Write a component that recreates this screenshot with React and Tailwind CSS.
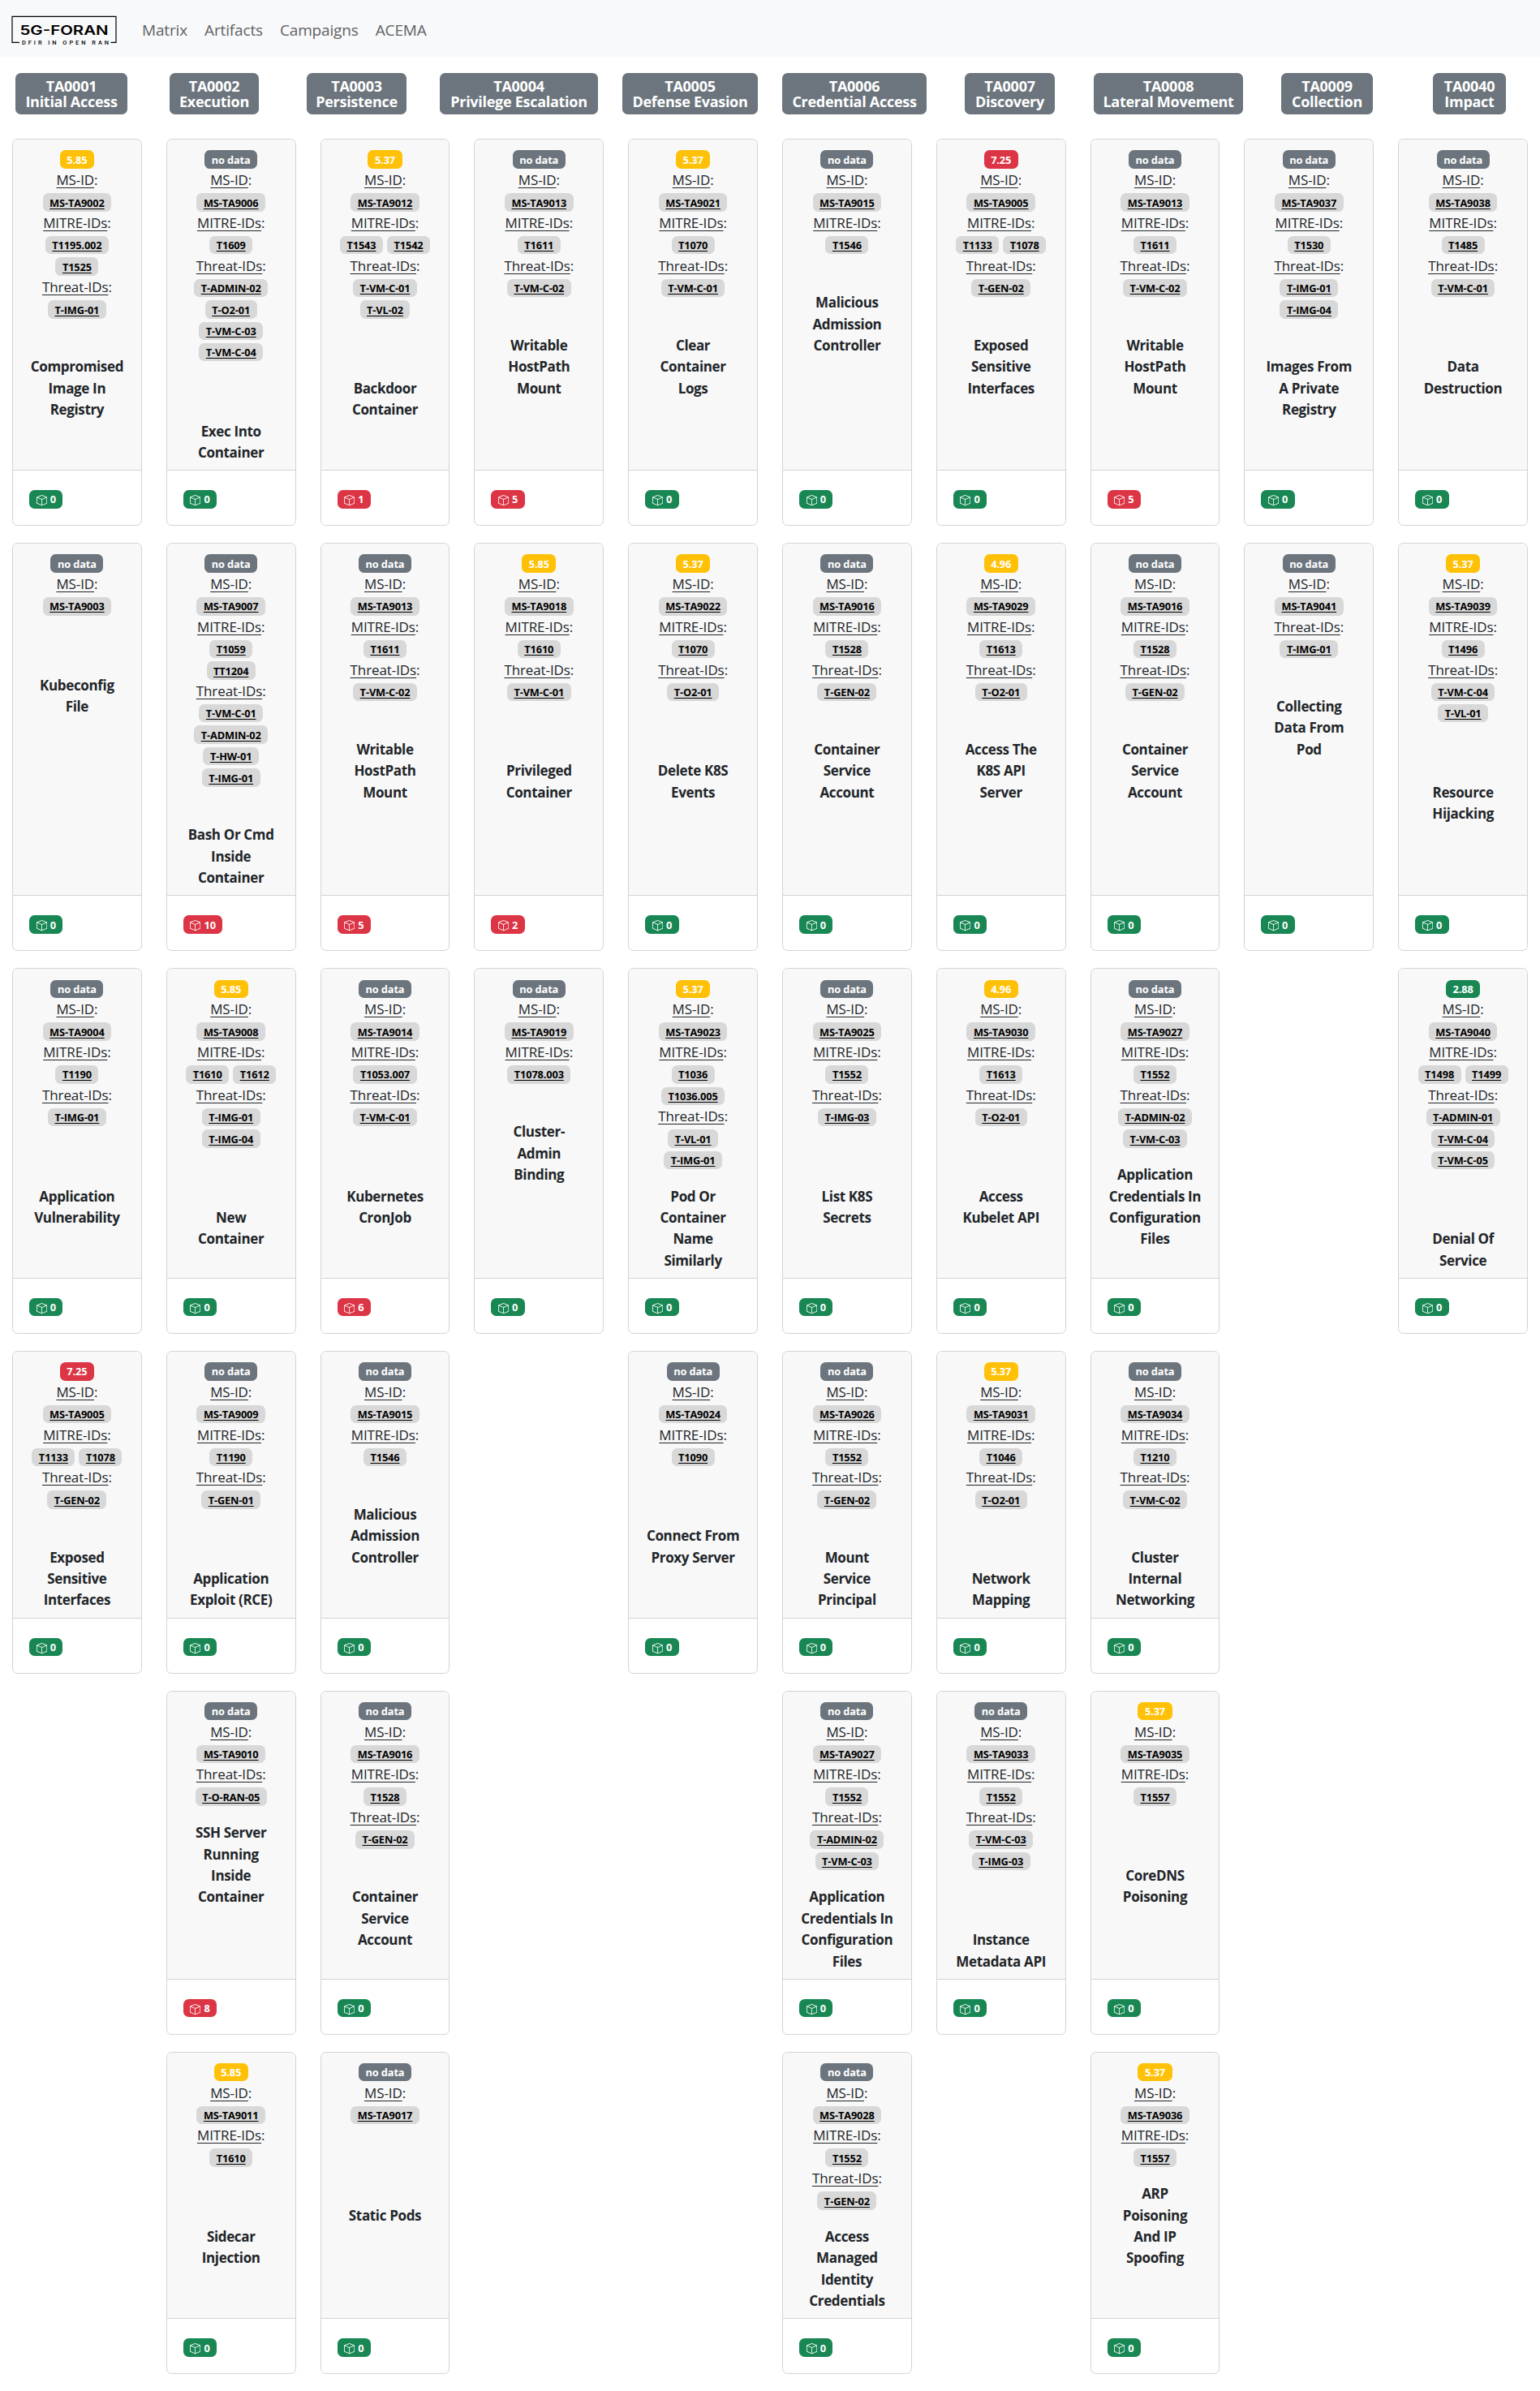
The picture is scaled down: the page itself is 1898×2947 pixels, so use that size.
import React from "react";
import { BsBox } from "react-icons/bs";

const NAV = ["Matrix", "Artifacts", "Campaigns", "ACEMA"];

const TACTICS = [
  ["TA0001", "Initial Access", "ml-[19px] w-[138px]"],
  ["TA0002", "Execution", "ml-[52px] w-[110px]"],
  ["TA0003", "Persistence", "ml-[59px] w-[123px]"],
  ["TA0004", "Privilege Escalation", "ml-[41px] w-[195px]"],
  ["TA0005", "Defense Evasion", "ml-[30px] w-[167px]"],
  ["TA0006", "Credential Access", "ml-[30px] w-[178px]"],
  ["TA0007", "Discovery", "ml-[47px] w-[111px]"],
  ["TA0008", "Lateral Movement", "ml-[48px] w-[184px]"],
  ["TA0009", "Collection", "ml-[47px] w-[113px]"],
  ["TA0040", "Impact", "ml-[74px] w-[90px]"],
];

const card = (score, ms, mitre, threats, name, count = 0) => ({
  score,
  ms,
  mitre: mitre ? mitre.split(" ") : [],
  threats: threats ? threats.split(" ") : [],
  name,
  count,
});

const ROWS = [
  [
    card("5.85", "9002", "T1195.002 T1525", "T-IMG-01", "Compromised\nImage In\nRegistry"),
    card(null, "9006", "T1609", "T-ADMIN-02 T-O2-01 T-VM-C-03 T-VM-C-04", "Exec Into\nContainer"),
    card("5.37", "9012", "T1543 T1542", "T-VM-C-01 T-VL-02", "Backdoor\nContainer", 1),
    card(null, "9013", "T1611", "T-VM-C-02", "Writable\nHostPath\nMount", 5),
    card("5.37", "9021", "T1070", "T-VM-C-01", "Clear\nContainer\nLogs"),
    card(null, "9015", "T1546", "", "Malicious\nAdmission\nController"),
    card("7.25", "9005", "T1133 T1078", "T-GEN-02", "Exposed\nSensitive\nInterfaces"),
    card(null, "9013", "T1611", "T-VM-C-02", "Writable\nHostPath\nMount", 5),
    card(null, "9037", "T1530", "T-IMG-01 T-IMG-04", "Images From\nA Private\nRegistry"),
    card(null, "9038", "T1485", "T-VM-C-01", "Data\nDestruction"),
  ],
  [
    card(null, "9003", "", "", "Kubeconfig\nFile"),
    card(null, "9007", "T1059 TT1204", "T-VM-C-01 T-ADMIN-02 T-HW-01 T-IMG-01", "Bash Or Cmd\nInside\nContainer", 10),
    card(null, "9013", "T1611", "T-VM-C-02", "Writable\nHostPath\nMount", 5),
    card("5.85", "9018", "T1610", "T-VM-C-01", "Privileged\nContainer", 2),
    card("5.37", "9022", "T1070", "T-O2-01", "Delete K8S\nEvents"),
    card(null, "9016", "T1528", "T-GEN-02", "Container\nService\nAccount"),
    card("4.96", "9029", "T1613", "T-O2-01", "Access The\nK8S API\nServer"),
    card(null, "9016", "T1528", "T-GEN-02", "Container\nService\nAccount"),
    card(null, "9041", "", "T-IMG-01", "Collecting\nData From\nPod"),
    card("5.37", "9039", "T1496", "T-VM-C-04 T-VL-01", "Resource\nHijacking"),
  ],
  [
    card(null, "9004", "T1190", "T-IMG-01", "Application\nVulnerability"),
    card("5.85", "9008", "T1610 T1612", "T-IMG-01 T-IMG-04", "New\nContainer"),
    card(null, "9014", "T1053.007", "T-VM-C-01", "Kubernetes\nCronJob", 6),
    card(null, "9019", "T1078.003", "", "Cluster-\nAdmin\nBinding"),
    card("5.37", "9023", "T1036 T1036.005", "T-VL-01 T-IMG-01", "Pod Or\nContainer\nName\nSimilarly"),
    card(null, "9025", "T1552", "T-IMG-03", "List K8S\nSecrets"),
    card("4.96", "9030", "T1613", "T-O2-01", "Access\nKubelet API"),
    card(null, "9027", "T1552", "T-ADMIN-02 T-VM-C-03", "Application\nCredentials In\nConfiguration\nFiles"),
    null,
    card("2.88", "9040", "T1498 T1499", "T-ADMIN-01 T-VM-C-04 T-VM-C-05", "Denial Of\nService"),
  ],
  [
    card("7.25", "9005", "T1133 T1078", "T-GEN-02", "Exposed\nSensitive\nInterfaces"),
    card(null, "9009", "T1190", "T-GEN-01", "Application\nExploit (RCE)"),
    card(null, "9015", "T1546", "", "Malicious\nAdmission\nController"),
    null,
    card(null, "9024", "T1090", "", "Connect From\nProxy Server"),
    card(null, "9026", "T1552", "T-GEN-02", "Mount\nService\nPrincipal"),
    card("5.37", "9031", "T1046", "T-O2-01", "Network\nMapping"),
    card(null, "9034", "T1210", "T-VM-C-02", "Cluster\nInternal\nNetworking"),
    null,
    null,
  ],
  [
    null,
    card(null, "9010", "", "T-O-RAN-05", "SSH Server\nRunning\nInside\nContainer", 8),
    card(null, "9016", "T1528", "T-GEN-02", "Container\nService\nAccount"),
    null,
    null,
    card(null, "9027", "T1552", "T-ADMIN-02 T-VM-C-03", "Application\nCredentials In\nConfiguration\nFiles"),
    card(null, "9033", "T1552", "T-VM-C-03 T-IMG-03", "Instance\nMetadata API"),
    card("5.37", "9035", "T1557", "", "CoreDNS\nPoisoning"),
    null,
    null,
  ],
  [
    null,
    card("5.85", "9011", "T1610", "", "Sidecar\nInjection"),
    card(null, "9017", "", "", "Static Pods"),
    null,
    null,
    card(null, "9028", "T1552", "T-GEN-02", "Access\nManaged\nIdentity\nCredentials"),
    null,
    card("5.37", "9036", "T1557", "", "ARP\nPoisoning\nAnd IP\nSpoofing"),
    null,
    null,
  ],
];

function scoreColor(score) {
  if (!score) return "bg-[#6c757d]";
  const n = parseFloat(score);
  if (n >= 7) return "bg-[#dc3545]";
  if (n >= 4) return "bg-[#ffc107]";
  return "bg-[#198754]";
}

function Line({ children }) {
  return <div className="flex h-[26.4px] items-start justify-center pt-[4px]">{children}</div>;
}

function Pill({ className, children }) {
  return (
    <span
      className={`block h-[22.4px] rounded-[6.6px] px-[8.5px] pt-[1.3px] text-[12.8px] leading-[20.4px] font-bold tracking-[-0.13px] whitespace-nowrap ${className}`}
    >
      {children}
    </span>
  );
}

function Label({ children }) {
  return (
    <div className="h-[26.4px] pt-[1.4px] text-[17px] leading-[26.4px] tracking-[-0.1px]">
      <span className="underline decoration-1 underline-offset-[3px]">{children}</span>:
    </div>
  );
}

function IdGroup({ label, ids }) {
  if (!ids.length) return null;
  return (
    <>
      <Label>{label}</Label>
      <div className="flex flex-wrap justify-center gap-x-[5px]">
        {ids.map((id) => (
          <Line key={id}>
            <Pill className="bg-[#d8d8d8] text-black underline decoration-1 underline-offset-2">{id}</Pill>
          </Line>
        ))}
      </div>
    </>
  );
}

function Card({ data }) {
  return (
    <div className="mx-[15px] flex flex-col overflow-hidden rounded-[6.6px] border border-[#d3d3d3] bg-white">
      <div className="grow border-b border-[#d3d3d3] bg-[#f8f8f8] px-[22px] pt-[9.2px] pb-[7.8px] text-center">
        <Line>
          <Pill className={`text-white ${scoreColor(data.score)}`}>{data.score || "no data"}</Pill>
        </Line>
        <IdGroup label="MS-ID" ids={[`MS-TA${data.ms}`]} />
        <IdGroup label="MITRE-IDs" ids={data.mitre} />
        <IdGroup label="Threat-IDs" ids={data.threats} />
        <div className="-mx-4 mt-[20.4px] flex h-[105.6px] items-end justify-center">
          <span className="text-[17px] leading-[26.4px] font-bold tracking-[-0.35px] whitespace-pre-line">
            {data.name}
          </span>
        </div>
      </div>
      <div className="flex h-[67px] items-start px-5 pt-[24px]">
        <Pill className={`text-white ${data.count ? "bg-[#dc3545]" : "bg-[#198754]"}`}>
          <span className="flex items-center gap-1">
            <BsBox className="mt-[2px] size-[13.2px]" />
            {data.count}
          </span>
        </Pill>
      </div>
    </div>
  );
}

function Logo() {
  return (
    <svg width="130" height="42" viewBox="0 0 130 42" className="mt-[18px] block text-black">
      <path d="M10 34.3H1V2.3H129V34.3H122.5" fill="none" stroke="currentColor" strokeWidth="1.2" />
      <text
        x="10.5"
        y="25.4"
        textLength="109"
        lengthAdjust="spacingAndGlyphs"
        className="fill-current font-['Inter'] text-[16px] font-semibold"
      >
        5G-FORAN
      </text>
      <text
        x="13"
        y="37.2"
        textLength="107"
        className="fill-current font-['Roboto'] text-[7.4px] font-medium"
      >
        DFIR IN OPEN RAN
      </text>
    </svg>
  );
}

export default function App() {
  return (
    <div className="min-h-[2947px] w-[1898px] bg-white font-['Open_Sans',sans-serif] text-[#212529]">
      <nav className="flex h-[70px] items-start bg-[#f8f9fa] pl-[14px]">
        <Logo />
        <div className="mt-[23px] ml-[31px] flex gap-[21px] text-[19px] leading-[28px] tracking-[-0.15px] text-[#606264]">
          {NAV.map((n) => (
            <a key={n}>{n}</a>
          ))}
        </div>
      </nav>

      <div className="flex pt-5">
        {TACTICS.map(([id, name, box]) => (
          <div
            key={id}
            className={`h-[51px] shrink-0 rounded-[6.6px] bg-[#6c757d] pt-[7px] text-center text-[18px] leading-[19px] font-bold tracking-[-0.28px] whitespace-nowrap text-white ${box}`}
          >
            <div>{id}</div>
            <div>{name}</div>
          </div>
        ))}
      </div>

      <div className="mt-[30.3px] grid grid-cols-10 gap-y-[21px]">
        {ROWS.flatMap((row, r) =>
          row.map((c, i) => (c ? <Card key={`${r}-${i}`} data={c} /> : <div key={`${r}-${i}`} />))
        )}
      </div>
    </div>
  );
}
